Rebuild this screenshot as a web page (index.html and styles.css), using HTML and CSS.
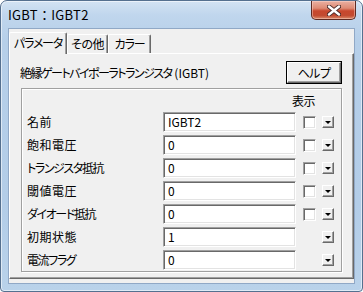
FILE: index.html
```html
<!DOCTYPE html>
<html lang="ja">
<head>
<meta charset="utf-8">
<title>IGBT：IGBT2</title>
<link rel="stylesheet" href="styles.css">
</head>
<body>
<div class="window">
  <div class="titlebar">
    <span class="title">IGBT：IGBT2</span>
    <div class="close">
      <svg width="14" height="11" viewBox="0 0 14 11">
        <path d="M2 1.5 L12 9.5 M12 1.5 L2 9.5" stroke="#4a2a28" stroke-width="4.2" stroke-linecap="round"/>
        <path d="M2 1.5 L12 9.5 M12 1.5 L2 9.5" stroke="#ffffff" stroke-width="2.4" stroke-linecap="round"/>
      </svg>
    </div>
  </div>
  <div class="client">
    <div class="tabs">
      <div class="tab active">パラメータ</div>
      <div class="tab t2">その他</div>
      <div class="tab t3">カラー</div>
    </div>
    <div class="panel">
      <div class="header">
        <span class="desc">絶縁ゲートバイポーラトランジスタ<span class="latin"> (IGBT)</span></span>
        <div class="btn"><span class="btn-in">ヘルプ</span></div>
      </div>
      <div class="group">
        <div class="colhead"><span class="colhead-text">表示</span></div>
        <div class="row"><span class="label">名前</span><div class="input">IGBT2</div><span class="chk"></span><span class="drop"></span></div>
        <div class="row"><span class="label">飽和電圧</span><div class="input">0</div><span class="chk"></span><span class="drop"></span></div>
        <div class="row"><span class="label kana">トランジスタ抵抗</span><div class="input">0</div><span class="chk"></span><span class="drop"></span></div>
        <div class="row"><span class="label">閾値電圧</span><div class="input">0</div><span class="chk"></span><span class="drop"></span></div>
        <div class="row"><span class="label kana">ダイオード抵抗</span><div class="input">0</div><span class="chk"></span><span class="drop"></span></div>
        <div class="row"><span class="label">初期状態</span><div class="input">1</div><span class="chk none"></span><span class="drop"></span></div>
        <div class="row"><span class="label kana">電流フラグ</span><div class="input">0</div><span class="chk none"></span><span class="drop"></span></div>
      </div>
    </div>
  </div>
</div>
</body>
</html>
```
FILE: styles.css
```css
* { box-sizing: border-box; }
html, body { margin: 0; padding: 0; background: #ffffff; }
body {
  font-family: "Noto Sans CJK JP", "Noto Sans", sans-serif;
  font-size: 12px;
  color: #000;
  font-feature-settings: "palt";
}
.window {
  width: 363px;
  height: 292px;
  border: 1px solid #55708f;
  border-radius: 7px 7px 4px 4px;
  background: linear-gradient(180deg, #d3e3f3 0px, #c0d6ed 14px, #b6cfe9 40px, #b3cde8 70%, #b9d2ea 100%);
  box-shadow: inset 0 0 0 1px rgba(255,255,255,0.55);
  display: flex;
  flex-direction: column;
  overflow: hidden;
}
.titlebar {
  height: 27px;
  display: flex;
  align-items: flex-start;
  flex: none;
}
.title {
  margin-left: 7px;
  margin-top: 5px;
  font-size: 13px;
  line-height: 18px;
  letter-spacing: 0.3px;
  font-feature-settings: normal;
  color: #000;
}
.close {
  margin-left: auto;
  margin-right: 6px;
  width: 45px;
  height: 19px;
  border: 1px solid #5e2a22;
  border-top: none;
  border-radius: 0 0 5px 5px;
  background: linear-gradient(180deg, #eab0a2 0%, #de8a74 40%, #c8482e 55%, #c24a30 80%, #da8a6a 100%);
  box-shadow: inset 0 0 0 1px rgba(255,220,210,0.45);
  display: flex;
  align-items: center;
  justify-content: center;
}
.close svg { display: block; }
.client {
  flex: 1;
  margin: 0 7px 7px 7px;
  border: 1px solid #90a8c6;
  background: #f0f0f0;
  display: flex;
  flex-direction: column;
  padding: 1px 0 4px 0;
}
.tabs {
  display: flex;
  align-items: flex-end;
  height: 23px;
  position: relative;
  z-index: 1;
}
.tab {
  height: 19px;
  white-space: nowrap;
  text-align: center;
  letter-spacing: -1.2px;
  border-top: 1px solid #ffffff;
  border-left: 1px solid #ffffff;
  border-right: 1px solid #696969;
  box-shadow: inset -1px 0 0 #a0a0a0;
  border-radius: 2px 2px 0 0;
  line-height: 17px;
  background: #f0f0f0;
}
.tab.t2 { width: 41px; letter-spacing: -0.5px; }
.tab.t3 { width: 43px; }
.tab.active {
  width: 58px;
  height: 22px;
  line-height: 19px;
  margin-bottom: -1px;
}
.panel {
  flex: 1;
  border-top: 1px solid #ffffff;
  border-left: 1px solid #ffffff;
  border-right: 1px solid #696969;
  border-bottom: 1px solid #696969;
  box-shadow: inset -1px -1px 0 #a0a0a0;
  background: #f0f0f0;
  padding: 7px 11px 0 11px;
  display: flex;
  flex-direction: column;
}
.header {
  display: flex;
  align-items: center;
  justify-content: space-between;
  height: 23px;
}
.desc { margin-left: -1px; line-height: 16px; white-space: nowrap; letter-spacing: -1.5px; }
.desc .latin { letter-spacing: 0; font-feature-settings: normal; }
.btn {
  width: 56px;
  height: 23px;
  border: 1px solid #000;
  background: #f0f0f0;
}
.btn-in {
  display: flex;
  align-items: center;
  justify-content: center;
  height: 100%;
  letter-spacing: -0.5px;
  border-top: 1px solid #fff;
  border-left: 1px solid #fff;
  border-right: 1px solid #696969;
  border-bottom: 1px solid #696969;
  box-shadow: inset -1px -1px 0 #a0a0a0;
  padding-bottom: 1px;
}
.group {
  margin-top: 4px;
  height: 184px;
  border: 1px solid #a0a0a0;
  box-shadow: inset 1px 1px 0 #fff, 1px 1px 0 #fff;
  padding: 0 0 0 5px;
  display: flex;
  flex-direction: column;
  gap: 3px;
}
.colhead {
  height: 20px;
  display: flex;
  align-items: flex-end;
  padding-left: 265px;
}
.colhead-text { line-height: 16px; letter-spacing: -0.5px; }
.row {
  display: flex;
  align-items: center;
  height: 20px;
}
.label {
  width: 136px;
  line-height: 16px;
  white-space: nowrap;
  letter-spacing: 0.5px;
}
.label.kana { letter-spacing: -1.4px; }
.input {
  width: 133px;
  height: 20px;
  background: #fff;
  border-top: 1px solid #a0a0a0;
  border-left: 1px solid #a0a0a0;
  border-right: 1px solid #fff;
  border-bottom: 1px solid #fff;
  box-shadow: inset 1px 1px 0 #696969, inset -1px -1px 0 #e3e3e3;
  padding-left: 4px;
  line-height: 18px;
  font-feature-settings: normal;
}
.chk {
  width: 13px;
  height: 13px;
  margin-left: 7px;
  background: #fff;
  border-top: 1px solid #a0a0a0;
  border-left: 1px solid #a0a0a0;
  border-right: 1px solid #fff;
  border-bottom: 1px solid #fff;
  box-shadow: inset 1px 1px 0 #696969, inset -1px -1px 0 #e3e3e3;
}
.chk.none { visibility: hidden; }
.drop {
  width: 12px;
  height: 12px;
  margin-left: 6px;
  background: #f0f0f0;
  border-top: 1px solid #fff;
  border-left: 1px solid #fff;
  border-right: 1px solid #696969;
  border-bottom: 1px solid #696969;
  box-shadow: inset -1px -1px 0 #a0a0a0;
  display: flex;
  align-items: center;
  justify-content: center;
}
.drop::after {
  content: "";
  width: 0;
  height: 0;
  border-left: 3px solid transparent;
  border-right: 3px solid transparent;
  border-top: 3px solid #000;
  margin-top: 1px;
}
```
